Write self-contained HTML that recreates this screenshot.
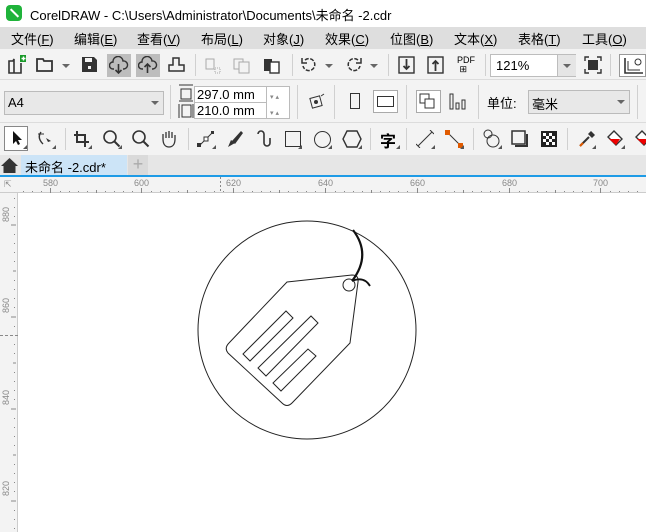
<!DOCTYPE html>
<html><head><meta charset="utf-8"><style>
*{margin:0;padding:0;box-sizing:border-box}
body{width:646px;height:532px;overflow:hidden;background:#fff;font-family:"Liberation Sans","Noto Sans CJK SC",sans-serif;position:relative;font-size:12px;color:#000}
.abs{position:absolute}
.title{top:0;left:0;width:646px;height:27px;background:#fff}
.menu{top:27px;left:0;width:646px;height:22px;background:#dedede;font-size:13px}
.menu span{position:absolute;top:2px}
.tb{left:0;width:646px;background:#f3f3f3;border-bottom:1px solid #dcdcdc}
.sep{position:absolute;width:1px;background:#d0d0d0}
.ico{position:absolute}
.tri{position:absolute;width:0;height:0;border-left:4px solid transparent;border-right:4px solid transparent;border-top:4px solid #666}
.sm{position:absolute;width:0;height:0;border-left:4px solid transparent;border-bottom:4px solid #555}
</style></head><body>
<div class="abs title">
 <div class="abs" style="left:6px;top:5px;width:16px;height:16px;background:#1fb33a;border-radius:4px"></div>
 <div class="abs" style="left:9px;top:12px;width:11px;height:2px;background:#fff;transform:rotate(45deg)"></div>
 <div class="abs" style="left:30px;top:5px;font-size:13px">CorelDRAW - C:\Users\Administrator\Documents\未命名 -2.cdr</div>
</div>
<div class="abs menu">
<span style="left:11px">文件(<u>F</u>)</span><span style="left:74px">编辑(<u>E</u>)</span><span style="left:137px">查看(<u>V</u>)</span><span style="left:201px">布局(<u>L</u>)</span><span style="left:263px">对象(<u>J</u>)</span><span style="left:325px">效果(<u>C</u>)</span><span style="left:390px">位图(<u>B</u>)</span><span style="left:454px">文本(<u>X</u>)</span><span style="left:518px">表格(<u>T</u>)</span><span style="left:582px">工具(<u>O</u>)</span>
</div>
<div class="abs tb" style="top:49px;height:31px">
 <svg class="ico" style="left:6px;top:6px" width="20" height="20"><path d="M3 6h4l1-2v14H3z M3 6v12h12V8" fill="none" stroke="#333" stroke-width="1.6"/><rect x="14" y="0" width="7" height="7" fill="#1a9a2a"/><path d="M17.5 1.5v4M15.5 3.5h4" stroke="#fff" stroke-width="1.4"/></svg>
 <svg class="ico" style="left:36px;top:8px" width="18" height="16"><path d="M1 2h6l1 2h8v10H1z" fill="none" stroke="#333" stroke-width="1.8"/></svg>
 <div class="tri" style="left:62px;top:15px"></div>
 <svg class="ico" style="left:81px;top:7px" width="17" height="17"><path d="M1 1h12l3 3v12H1z" fill="#333"/><rect x="4" y="2" width="7" height="4" fill="#f3f3f3"/><rect x="7" y="10" width="3" height="3" fill="#f3f3f3"/></svg>
 <div class="abs" style="left:107px;top:5px;width:24px;height:23px;background:#bdbdbd"></div>
 <svg class="ico" style="left:109px;top:7px" width="20" height="18"><path d="M5 13H4a3.5 3.5 0 0 1 0-7 5 5 0 0 1 10-1 4 4 0 0 1 1 8h-1" fill="none" stroke="#333" stroke-width="1.4"/><path d="M9.5 8v9M6.5 14l3 3 3-3" fill="none" stroke="#333" stroke-width="1.6"/></svg>
 <div class="abs" style="left:136px;top:5px;width:24px;height:23px;background:#bdbdbd"></div>
 <svg class="ico" style="left:138px;top:7px" width="20" height="18"><path d="M5 13H4a3.5 3.5 0 0 1 0-7 5 5 0 0 1 10-1 4 4 0 0 1 1 8h-1" fill="none" stroke="#333" stroke-width="1.4"/><path d="M9.5 17V8M6.5 11l3-3 3 3" fill="none" stroke="#333" stroke-width="1.6"/></svg>
 <svg class="ico" style="left:168px;top:8px" width="18" height="16"><path d="M5 1h6v7h5v6H1V8h4z" fill="none" stroke="#333" stroke-width="1.5"/></svg>
 <div class="sep" style="left:195px;top:5px;height:22px"></div>
 <svg class="ico" style="left:205px;top:9px" width="16" height="16"><rect x="1" y="1" width="8" height="10" fill="none" stroke="#aaa"/><rect x="10" y="10" width="5" height="5" fill="none" stroke="#aaa" stroke-dasharray="1 1"/></svg>
 <svg class="ico" style="left:233px;top:9px" width="18" height="16"><rect x="1" y="1" width="9" height="10" fill="none" stroke="#aaa"/><rect x="6" y="4" width="10" height="11" fill="#f3f3f3" stroke="#aaa"/></svg>
 <svg class="ico" style="left:263px;top:8px" width="18" height="17"><rect x="1" y="2" width="8" height="12" fill="#333"/><rect x="7" y="5" width="9" height="11" fill="#fff" stroke="#333" stroke-width="1.4"/></svg>
 <div class="sep" style="left:292px;top:5px;height:22px"></div>
 <svg class="ico" style="left:300px;top:7px" width="18" height="18"><path d="M5 4a6 6 0 1 1-2 6" fill="none" stroke="#333" stroke-width="1.5" stroke-dasharray="4 1.5"/><path d="M2 2v5h5" fill="none" stroke="#333" stroke-width="1.5"/></svg>
 <div class="tri" style="left:325px;top:15px"></div>
 <svg class="ico" style="left:345px;top:7px" width="18" height="18"><path d="M13 4a6 6 0 1 0 2 6" fill="none" stroke="#333" stroke-width="1.5" stroke-dasharray="4 1.5"/><path d="M16 2v5h-5" fill="none" stroke="#333" stroke-width="1.5"/></svg>
 <div class="tri" style="left:370px;top:15px"></div>
 <div class="sep" style="left:388px;top:5px;height:22px"></div>
 <svg class="ico" style="left:398px;top:7px" width="17" height="18"><rect x="1" y="1" width="15" height="16" fill="none" stroke="#333" stroke-width="1.4"/><path d="M8.5 3v10M5.5 10l3 3 3-3" fill="none" stroke="#333" stroke-width="1.8"/></svg>
 <svg class="ico" style="left:427px;top:7px" width="17" height="18"><rect x="1" y="1" width="15" height="16" fill="none" stroke="#333" stroke-width="1.4"/><path d="M8.5 15V5M5.5 8l3-3 3 3" fill="none" stroke="#333" stroke-width="1.8"/></svg>
 <div class="abs" style="left:457px;top:7px;font-size:9px;line-height:9px">PDF<br>&nbsp;⊞</div>
 <div class="sep" style="left:485px;top:5px;height:22px"></div>
 <div class="abs" style="left:490px;top:5px;width:86px;height:23px;background:#fff;border:1px solid #bdbdbd"><span style="position:absolute;left:5px;top:3px;font-size:13px">121%</span><div class="abs" style="left:66px;top:0;width:19px;height:21px;background:#e5e5e5;border-left:1px solid #bdbdbd"></div><div class="tri" style="left:72px;top:9px"></div></div>
 <svg class="ico" style="left:584px;top:7px" width="18" height="18"><path d="M1 5V1h4M13 1h4v4M17 13v4h-4M5 17H1v-4" fill="none" stroke="#333" stroke-width="1.4"/><rect x="4" y="4" width="10" height="10" fill="#333"/></svg>
 <div class="sep" style="left:610px;top:5px;height:22px"></div>
 <div class="abs" style="left:619px;top:5px;width:27px;height:23px;background:#fff;border:1px solid #999"></div>
 <svg class="ico" style="left:623px;top:8px" width="22" height="18"><path d="M2 1v15h18" fill="none" stroke="#333" stroke-width="1.6"/><path d="M5 4v9h12" fill="none" stroke="#333" stroke-width="1"/><circle cx="15" cy="5" r="3" fill="none" stroke="#333"/></svg>
</div>
<div class="abs tb" style="top:80px;height:43px">
 <div class="abs" style="left:4px;top:11px;width:160px;height:24px;background:#e8e8e8;border:1px solid #bbb"><span style="position:absolute;left:3px;top:3px;font-size:13px">A4</span><div class="tri" style="left:146px;top:9px"></div></div>
 <div class="sep" style="left:170px;top:5px;height:34px"></div>
 <svg class="ico" style="left:178px;top:84px;top:4px" width="16" height="36"><path d="M1 1h14M1 17h14M3 5h10v10H3z" fill="none" stroke="#333"/><path d="M1 20v14M15 20v14M4 21h9v12H4z" fill="none" stroke="#333"/></svg>
 <div class="abs" style="left:194px;top:6px;width:96px;height:33px;background:#fff;border:1px solid #bbb"></div>
 <div class="abs" style="left:194px;top:22px;width:72px;height:1px;background:#bbb"></div>
 <div class="abs" style="left:266px;top:6px;width:1px;height:33px;background:#bbb"></div>
 <span class="abs" style="left:197px;top:7px;font-size:13px">297.0 mm</span>
 <span class="abs" style="left:197px;top:23px;font-size:13px">210.0 mm</span>
 <div class="abs" style="left:270px;top:13px;font-size:7px;color:#888">▾ ▴</div>
 <div class="abs" style="left:270px;top:29px;font-size:7px;color:#888">▾ ▴</div>
 <div class="sep" style="left:297px;top:5px;height:34px"></div>
 <svg class="ico" style="left:307px;top:13px" width="20" height="18"><rect x="4" y="4" width="10" height="10" fill="none" stroke="#333" transform="rotate(-15 9 9)"/><circle cx="9" cy="9" r="2" fill="#333"/><path d="M14 3l3-2" stroke="#333"/></svg>
 <div class="sep" style="left:334px;top:5px;height:34px"></div>
 <div class="abs" style="left:350px;top:13px;width:10px;height:16px;border:1.5px solid #333"></div>
 <div class="abs" style="left:373px;top:10px;width:25px;height:23px;background:#fff;border:1px solid #aaa"></div>
 <div class="abs" style="left:377px;top:16px;width:17px;height:11px;border:1.5px solid #333"></div>
 <div class="sep" style="left:406px;top:5px;height:34px"></div>
 <div class="abs" style="left:416px;top:10px;width:25px;height:23px;background:#fff;border:1px solid #aaa"></div>
 <svg class="ico" style="left:419px;top:13px" width="18" height="18"><rect x="1" y="1" width="9" height="9" fill="#fff" stroke="#333"/><rect x="6" y="6" width="9" height="9" fill="#fff" stroke="#333"/></svg>
 <svg class="ico" style="left:449px;top:13px" width="18" height="18"><rect x="1" y="1" width="3" height="15" fill="none" stroke="#333"/><rect x="7" y="10" width="3" height="6" fill="none" stroke="#333"/><rect x="13" y="7" width="3" height="9" fill="none" stroke="#333"/></svg>
 <div class="sep" style="left:478px;top:5px;height:34px"></div>
 <span class="abs" style="left:487px;top:13px;font-size:13px">单位:</span>
 <div class="abs" style="left:528px;top:10px;width:102px;height:24px;background:#e8e8e8;border:1px solid #bbb"><span style="position:absolute;left:3px;top:3px;font-size:13px">毫米</span><div class="tri" style="left:88px;top:9px"></div></div>
 <div class="sep" style="left:637px;top:5px;height:34px"></div>
</div>
<div class="abs tb" style="top:123px;height:32px;border-bottom:none">
 <div class="abs" style="left:4px;top:3px;width:24px;height:25px;background:#fff;border:1px solid #888"></div>
 <svg class="ico" style="left:11px;top:7px" width="12" height="16"><path d="M2 1v13l3-3 2 4 2-1-2-4h4z" fill="#111"/></svg>
 <svg class="ico" style="left:37px;top:7px" width="18" height="18"><path d="M4 2c-3 4-2 8 2 12" fill="none" stroke="#333" stroke-width="1.4"/><path d="M9 8l5 3-3 1z" fill="#333"/><path d="M1 4h6" stroke="#333"/></svg>
 <div class="sep" style="left:65px;top:5px;height:22px"></div>
 <svg class="ico" style="left:73px;top:7px" width="18" height="18"><path d="M4 1v11h12M1 5h11v12" fill="none" stroke="#333" stroke-width="2"/></svg>
 <svg class="ico" style="left:102px;top:6px" width="20" height="20"><circle cx="8" cy="8" r="6" fill="none" stroke="#333" stroke-width="1.6"/><path d="M12.5 12.5l5 5" stroke="#333" stroke-width="2"/></svg>
 <svg class="ico" style="left:131px;top:6px" width="20" height="20"><circle cx="8" cy="8" r="6" fill="none" stroke="#333" stroke-width="1.6"/><path d="M12.5 12.5l5 5" stroke="#333" stroke-width="2"/></svg>
 <svg class="ico" style="left:160px;top:6px" width="18" height="20"><path d="M3 10V5M6 9V3M9 9V2M12 9V3M15 10V6M3 10c0 6 3 8 6 8s6-2 6-8" fill="none" stroke="#333" stroke-width="1.3"/></svg>
 <div class="sep" style="left:188px;top:5px;height:22px"></div>
 <svg class="ico" style="left:197px;top:7px" width="18" height="18"><path d="M2 16L16 2" stroke="#333"/><rect x="0" y="13" width="4" height="4" fill="#333"/><rect x="14" y="1" width="3" height="3" fill="#333"/><rect x="7" y="7" width="4" height="4" fill="#fff" stroke="#333"/></svg>
 <svg class="ico" style="left:226px;top:7px" width="18" height="18"><path d="M2 17l3-7 4 3z" fill="#333"/><path d="M6 11l9-10 2 2-8 11z" fill="#333"/></svg>
 <svg class="ico" style="left:255px;top:6px" width="18" height="20"><path d="M3 5a3 3 0 0 1 6 0v9a3 3 0 0 0 6 0V9" fill="none" stroke="#333" stroke-width="1.6"/></svg>
 <div class="abs" style="left:285px;top:8px;width:16px;height:16px;border:1.5px solid #333"></div>
 <div class="abs" style="left:314px;top:8px;width:17px;height:17px;border:1.5px solid #333;border-radius:50%"></div>
 <svg class="ico" style="left:342px;top:7px" width="20" height="18"><path d="M5 1h10l4 8-4 8H5L1 9z" fill="none" stroke="#333" stroke-width="1.4"/></svg>
 <div class="sep" style="left:370px;top:5px;height:22px"></div>
 <span class="abs" style="left:380px;top:5px;font-size:16px;font-weight:bold">字</span>
 <div class="sep" style="left:406px;top:5px;height:22px"></div>
 <svg class="ico" style="left:416px;top:7px" width="18" height="18"><path d="M2 16L16 2M0 14l4 4M14 0l4 4" stroke="#333"/></svg>
 <svg class="ico" style="left:445px;top:7px" width="18" height="18"><path d="M3 3l12 12" stroke="#333"/><rect x="0" y="0" width="5" height="5" fill="#e05a00"/><rect x="13" y="13" width="5" height="5" fill="#e05a00"/></svg>
 <div class="sep" style="left:473px;top:5px;height:22px"></div>
 <svg class="ico" style="left:482px;top:6px" width="20" height="20"><circle cx="6" cy="5" r="4" fill="none" stroke="#333"/><circle cx="11" cy="12" r="6" fill="none" stroke="#333"/></svg>
 <svg class="ico" style="left:511px;top:7px" width="18" height="18"><rect x="1" y="1" width="13" height="13" fill="none" stroke="#333" stroke-width="1.5"/><path d="M16 4v12H4" fill="none" stroke="#333" stroke-width="2"/></svg>
 <svg class="ico" style="left:541px;top:8px" width="16" height="16"><rect width="16" height="16" fill="#222"/><path d="M2 2h3v3H2zM8 2h3v3H8zM5 5h3v3H5zM11 5h3v3h-3zM2 8h3v3H2zM8 8h3v3H8zM5 11h3v3H5zM11 11h3v3h-3z" fill="#fff"/></svg>
 <div class="sep" style="left:567px;top:5px;height:22px"></div>
 <svg class="ico" style="left:578px;top:7px" width="18" height="18"><path d="M2 16l9-9" stroke="#333" stroke-width="2"/><path d="M2 16l3-3" stroke="#e05a00" stroke-width="2"/><path d="M10 4l4 4 3-3-4-4z" fill="#333"/></svg>
 <svg class="ico" style="left:606px;top:7px" width="20" height="18"><path d="M8 1l8 8-6 6-8-8z" fill="#fff" stroke="#333" stroke-width="1.4"/><path d="M3 9h11l-4 6z" fill="#e00"/></svg>
 <svg class="ico" style="left:634px;top:7px" width="12" height="18"><path d="M8 1l8 8-6 6-8-8z" fill="#fff" stroke="#333" stroke-width="1.4"/><path d="M3 9h11l-4 6z" fill="#e00"/></svg>
 <div class="sm" style="left:23px;top:22px"></div><div class="sm" style="left:52px;top:22px"></div><div class="sm" style="left:88px;top:22px"></div><div class="sm" style="left:118px;top:22px"></div><div class="sm" style="left:212px;top:22px"></div><div class="sm" style="left:298px;top:22px"></div><div class="sm" style="left:328px;top:22px"></div><div class="sm" style="left:358px;top:22px"></div><div class="sm" style="left:396px;top:22px"></div><div class="sm" style="left:431px;top:22px"></div><div class="sm" style="left:460px;top:22px"></div><div class="sm" style="left:498px;top:22px"></div><div class="sm" style="left:592px;top:22px"></div><div class="sm" style="left:621px;top:22px"></div>
</div>
<div class="abs" style="top:155px;left:0;width:646px;height:20px;background:#e6e6e6">
 <svg class="ico" style="left:1px;top:3px" width="17" height="15"><path d="M8.5 0L0 8h2.5v7h12V8H17z" fill="#333"/></svg>
 <div class="abs" style="left:21px;top:0;width:106px;height:20px;background:#cce4f7"><span style="position:absolute;left:4px;top:2px;font-size:13px">未命名 -2.cdr*</span></div>
 <div class="abs" style="left:128px;top:0;width:20px;height:20px;background:#dadada;color:#aaa;font-size:18px;text-align:center;line-height:19px">+</div>
</div>
<div class="abs" style="top:175px;left:0;width:646px;height:2px;background:#1e9be6"></div>
<div class="abs" style="top:177px;left:0;width:646px;height:16px;background:#f3f3f3;border-bottom:1px solid #ccc">
 <span class="abs" style="left:4px;top:2px;font-size:9px;color:#888">⇱</span>
 <svg class="abs" style="left:0;top:0" width="646" height="16">
  <g fill="#888" font-size="9" font-family="Liberation Sans">
   <text x="43" y="9">580</text><text x="134" y="9">600</text><text x="226" y="9">620</text><text x="318" y="9">640</text><text x="410" y="9">660</text><text x="502" y="9">680</text><text x="593" y="9">700</text>
  </g>
  <g stroke="#888">
   <path d="M50.5 11v5M141.5 11v5M233.5 11v5M325.5 11v5M417.5 11v5M509.5 11v5M600.5 11v5"/>
  </g>
  <g fill="#888"><rect x="23" y="14" width="1" height="1"/><rect x="32" y="14" width="1" height="1"/><rect x="41" y="14" width="1" height="1"/><rect x="60" y="14" width="1" height="1"/><rect x="69" y="14" width="1" height="1"/><rect x="78" y="14" width="1" height="1"/><rect x="87" y="14" width="1" height="1"/><rect x="96" y="13" width="1" height="3"/><rect x="105" y="14" width="1" height="1"/><rect x="114" y="14" width="1" height="1"/><rect x="123" y="14" width="1" height="1"/><rect x="132" y="14" width="1" height="1"/><rect x="151" y="14" width="1" height="1"/><rect x="160" y="14" width="1" height="1"/><rect x="169" y="14" width="1" height="1"/><rect x="178" y="14" width="1" height="1"/><rect x="187" y="13" width="1" height="3"/><rect x="196" y="14" width="1" height="1"/><rect x="205" y="14" width="1" height="1"/><rect x="214" y="14" width="1" height="1"/><rect x="223" y="14" width="1" height="1"/><rect x="243" y="14" width="1" height="1"/><rect x="252" y="14" width="1" height="1"/><rect x="261" y="14" width="1" height="1"/><rect x="270" y="14" width="1" height="1"/><rect x="279" y="13" width="1" height="3"/><rect x="288" y="14" width="1" height="1"/><rect x="297" y="14" width="1" height="1"/><rect x="306" y="14" width="1" height="1"/><rect x="315" y="14" width="1" height="1"/><rect x="335" y="14" width="1" height="1"/><rect x="344" y="14" width="1" height="1"/><rect x="353" y="14" width="1" height="1"/><rect x="362" y="14" width="1" height="1"/><rect x="371" y="13" width="1" height="3"/><rect x="380" y="14" width="1" height="1"/><rect x="389" y="14" width="1" height="1"/><rect x="398" y="14" width="1" height="1"/><rect x="407" y="14" width="1" height="1"/><rect x="427" y="14" width="1" height="1"/><rect x="436" y="14" width="1" height="1"/><rect x="445" y="14" width="1" height="1"/><rect x="454" y="14" width="1" height="1"/><rect x="463" y="13" width="1" height="3"/><rect x="472" y="14" width="1" height="1"/><rect x="481" y="14" width="1" height="1"/><rect x="490" y="14" width="1" height="1"/><rect x="499" y="14" width="1" height="1"/><rect x="519" y="14" width="1" height="1"/><rect x="528" y="14" width="1" height="1"/><rect x="537" y="14" width="1" height="1"/><rect x="546" y="14" width="1" height="1"/><rect x="555" y="13" width="1" height="3"/><rect x="564" y="14" width="1" height="1"/><rect x="573" y="14" width="1" height="1"/><rect x="582" y="14" width="1" height="1"/><rect x="591" y="14" width="1" height="1"/><rect x="610" y="14" width="1" height="1"/><rect x="619" y="14" width="1" height="1"/><rect x="628" y="14" width="1" height="1"/><rect x="637" y="14" width="1" height="1"/></g>
  <path d="M220.5 0v16" stroke="#888" stroke-dasharray="2 2"/>
 </svg>
</div>
<div class="abs" style="top:193px;left:0;width:18px;height:339px;background:#f3f3f3;border-right:1px solid #ccc">
 <svg class="abs" style="left:0;top:0" width="18" height="339">
  <g fill="#888" font-size="9" font-family="Liberation Sans">
   <text transform="translate(9,29) rotate(-90)">880</text><text transform="translate(9,120) rotate(-90)">860</text><text transform="translate(9,212) rotate(-90)">840</text><text transform="translate(9,303) rotate(-90)">820</text>
  </g>
  <path d="M11 32h5M11 124h5M11 216h5M11 308h5M13 78h3M13 170h3M13 262h3" stroke="#888"/>
  <path d="M0 142.5h18" stroke="#888" stroke-dasharray="3 2"/>
  <g fill="#888"><rect x="14" y="5" width="1" height="1"/><rect x="14" y="14" width="1" height="1"/><rect x="14" y="23" width="1" height="1"/><rect x="14" y="41" width="1" height="1"/><rect x="14" y="50" width="1" height="1"/><rect x="14" y="59" width="1" height="1"/><rect x="14" y="68" width="1" height="1"/><rect x="14" y="87" width="1" height="1"/><rect x="14" y="96" width="1" height="1"/><rect x="14" y="105" width="1" height="1"/><rect x="14" y="114" width="1" height="1"/><rect x="14" y="133" width="1" height="1"/><rect x="14" y="151" width="1" height="1"/><rect x="14" y="160" width="1" height="1"/><rect x="14" y="179" width="1" height="1"/><rect x="14" y="188" width="1" height="1"/><rect x="14" y="197" width="1" height="1"/><rect x="14" y="206" width="1" height="1"/><rect x="14" y="225" width="1" height="1"/><rect x="14" y="234" width="1" height="1"/><rect x="14" y="243" width="1" height="1"/><rect x="14" y="252" width="1" height="1"/><rect x="14" y="271" width="1" height="1"/><rect x="14" y="280" width="1" height="1"/><rect x="14" y="289" width="1" height="1"/><rect x="14" y="298" width="1" height="1"/><rect x="14" y="317" width="1" height="1"/><rect x="14" y="326" width="1" height="1"/><rect x="14" y="335" width="1" height="1"/></g>
 </svg>
</div>
<svg class="abs" style="left:0;top:0" width="646" height="532">
 <circle cx="307" cy="330" r="109" fill="none" stroke="#222" stroke-width="1"/>
 <path d="M287 282L352 275Q359 275 358 282L350 343L292 403Q287 408 282 403L228 353Q224 348 229 343z" fill="#fff" stroke="#222" stroke-width="1"/>
 <circle cx="349" cy="285" r="6" fill="#fff" stroke="#222"/>
 <path d="M353 230Q372 255 352 281" fill="none" stroke="#111" stroke-width="2.2"/>
 <path d="M352 281Q364 276 370 286" fill="none" stroke="#111" stroke-width="1.8"/>
 <path d="M243 354L250 361L293 318L286 311z" fill="none" stroke="#222"/>
 <path d="M258 368L266 376L318 323L311 316z" fill="none" stroke="#222"/>
 <path d="M273 383L281 391L316 356L308 349z" fill="none" stroke="#222"/>
</svg>
</body></html>
